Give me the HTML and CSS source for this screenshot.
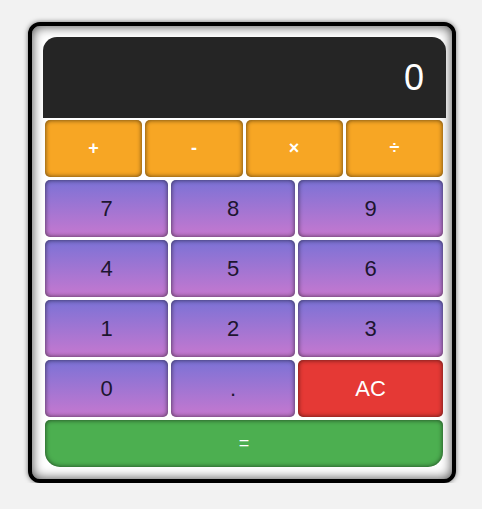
FILE: index.html
```html
<!DOCTYPE html>
<html>
<head>
<meta charset="utf-8">
<link rel="stylesheet" href="styles.css">
</head>
<body>
<div class="calc">
  <div class="display">0</div>
  <div class="keys">
    <div class="row ops">
      <button class="key op">+</button>
      <button class="key op">-</button>
      <button class="key op">×</button>
      <button class="key op">÷</button>
    </div>
    <div class="row nums">
      <button class="key num">7</button>
      <button class="key num">8</button>
      <button class="key num">9</button>
    </div>
    <div class="row nums">
      <button class="key num">4</button>
      <button class="key num">5</button>
      <button class="key num">6</button>
    </div>
    <div class="row nums">
      <button class="key num">1</button>
      <button class="key num">2</button>
      <button class="key num">3</button>
    </div>
    <div class="row nums">
      <button class="key num">0</button>
      <button class="key num">.</button>
      <button class="key clear">AC</button>
    </div>
    <button class="key equals">=</button>
  </div>
</div>
</body>
</html>
```
FILE: styles.css
```css
html, body {
  margin: 0;
  padding: 0;
  background: #f2f2f2;
}
body {
  padding: 22px 0 0 28px;
  font-family: "Liberation Sans", Arial, sans-serif;
}
.calc {
  box-sizing: border-box;
  width: 428px;
  height: 461px;
  border: 4px solid #000;
  border-radius: 12px;
  background: #fff;
  padding: 11px 6px 12px 11px;
  box-shadow: inset 0 0 12px rgba(0, 0, 0, 0.75), 0 0 5px rgba(0, 0, 0, 0.55);
}
.display {
  height: 81px;
  background: #252525;
  border-radius: 14px 14px 0 0;
  color: #fff;
  font-size: 36px;
  display: flex;
  align-items: center;
  justify-content: flex-end;
  padding-right: 22px;
}
.keys {
  margin: 2px 3px 0 2px;
  display: flex;
  flex-direction: column;
  gap: 3px;
}
.row {
  display: grid;
  gap: 3px;
  height: 57px;
}
.ops {
  grid-template-columns: repeat(4, 1fr);
}
.nums {
  grid-template-columns: 123px 124px 145px;
}
.key {
  border: none;
  margin: 0;
  padding: 0;
  font-family: "Liberation Sans", Arial, sans-serif;
  border-radius: 5px;
  box-shadow: inset 0 0 5px rgba(0, 0, 0, 0.65);
  cursor: pointer;
}
.op {
  background: #f7a624;
  color: #fff;
  font-size: 18px;
  font-weight: bold;
}
.num {
  background: linear-gradient(#7b72d6, #c678cf);
  color: #1d1530;
  font-size: 22px;
}
.clear {
  background: #e53935;
  color: #fff;
  font-size: 22px;
}
.equals {
  height: 47px;
  background: #4caf50;
  color: #fff;
  font-size: 18px;
  border-radius: 5px 5px 15px 15px;
}
```
